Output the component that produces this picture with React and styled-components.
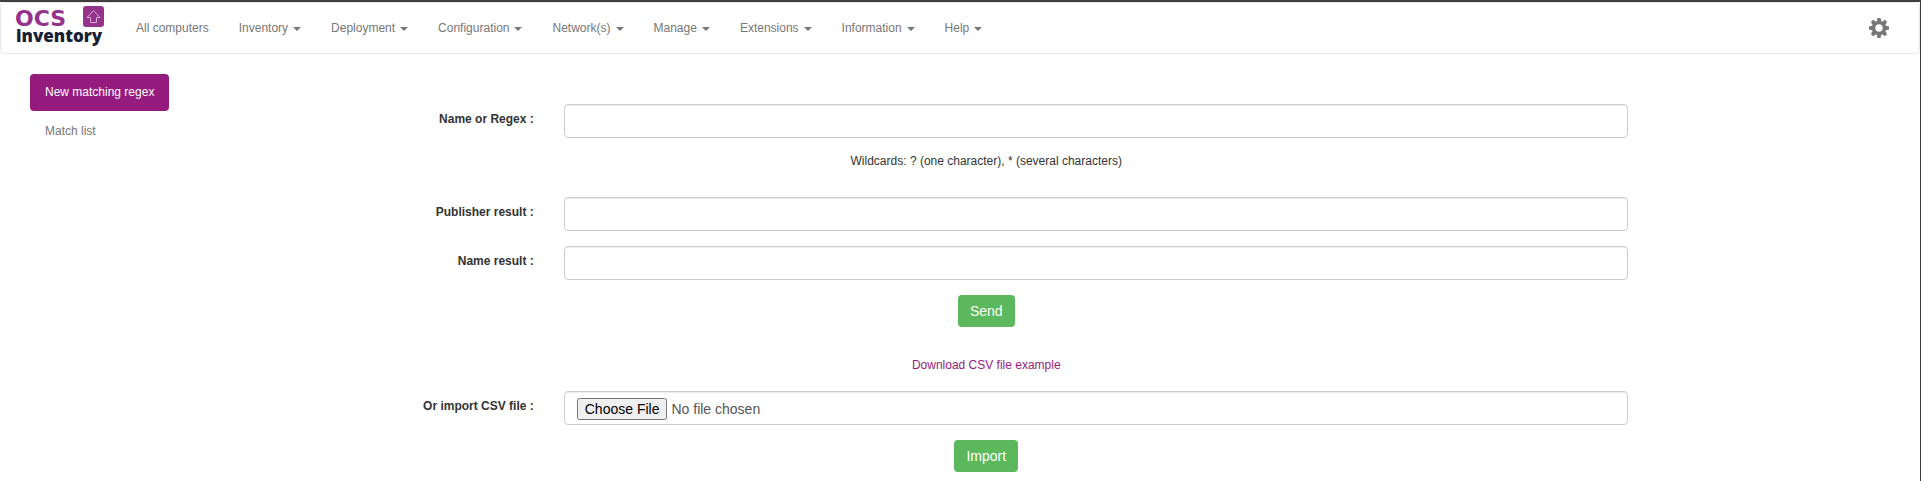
import React from "react";
import styled, { createGlobalStyle } from "styled-components";

const GlobalStyle = createGlobalStyle`
  *, *::before, *::after { box-sizing: border-box; }
  body {
    margin: 0;
    background: #fff;
    color: #333;
    font-family: "Liberation Sans", Arial, sans-serif;
    font-size: 12px;
    line-height: 17px;
  }
`;

const Page = styled.div`
  min-height: 100vh;
  border-top: 2px solid #403d3d;
  border-right: 1px solid #403d3d;
`;

const Navbar = styled.nav`
  display: flex;
  align-items: center;
  min-height: 52px;
  padding: 0 15px;
  border: 1px solid #e7e7e7;
  border-radius: 4px;
  margin-bottom: 20px;
`;

const Brand = styled.a`
  display: block;
  height: 44px;
  margin-right: 15px;
  svg { display: block; }
`;

const Menu = styled.ul`
  display: flex;
  flex: 1;
  list-style: none;
  margin: 0;
  padding: 0;
`;

const MenuLink = styled.a`
  display: block;
  padding: 15px;
  color: #777;
  text-decoration: none;
`;

const MenuButton = styled.button`
  display: flex;
  align-items: center;
  gap: 5px;
  padding: 15px;
  border: 0;
  background: none;
  color: #777;
  font: inherit;
  cursor: pointer;

  &::after {
    content: "";
    border-top: 4px solid;
    border-left: 4px solid transparent;
    border-right: 4px solid transparent;
    margin-top: 2px;
  }
`;

const SettingsButton = styled.button`
  padding: 0 15px;
  border: 0;
  background: none;
  color: #777;
  cursor: pointer;
  svg { display: block; }
`;

const Columns = styled.div`
  display: grid;
  grid-template-columns: 2fr 10fr;
  padding: 0 15px;
`;

const Sidebar = styled.ul`
  display: flex;
  flex-direction: column;
  align-items: flex-start;
  gap: 2px;
  list-style: none;
  margin: 0;
  padding: 0 15px;
`;

const Pill = styled.a`
  display: block;
  padding: 10px 15px;
  border-radius: 4px;
  text-decoration: none;
  color: ${(p) => (p.$active ? "#fff" : "#777")};
  background: ${(p) => (p.$active ? "#961b7e" : "transparent")};
`;

const Form = styled.form`
  width: calc(100% * 10 / 12);
  padding-top: 30px;
`;

const Field = styled.div`
  display: grid;
  grid-template-columns: 2fr 10fr;
  margin-bottom: 15px;
`;

const Label = styled.label`
  padding: 7px 15px 0;
  text-align: right;
  font-weight: bold;
`;

const Control = styled.div`
  padding: 0 15px;
`;

const Input = styled.input`
  display: block;
  width: 100%;
  height: 34px;
  padding: 6px 12px;
  border: 1px solid #ccc;
  border-radius: 4px;
  background: #fff;
  color: #555;
  font: 14px/20px "Liberation Sans", Arial, sans-serif;
  box-shadow: inset 0 1px 1px rgba(0, 0, 0, 0.075);
`;

const Hint = styled.p`
  margin: 0 0 27px;
  text-align: center;
`;

const Actions = styled.div`
  display: flex;
  justify-content: center;
`;

const Submit = styled.button`
  padding: 6px 12px;
  border: 0;
  border-radius: 4px;
  background: #5cb85c;
  color: #fff;
  font: 14px/20px "Liberation Sans", Arial, sans-serif;
  cursor: pointer;
`;

const Download = styled.p`
  margin: 30px 0 17px;
  text-align: center;
  a { color: #961b7e; text-decoration: none; }
`;

const Logo = () => (
  <svg width="90" height="44" viewBox="0 0 90 44" role="img" aria-label="OCS Inventory">
    <text x="-1" y="20" fontFamily="DejaVu Sans" fontWeight="bold" fontSize="22" fill="#94328c">OCS</text>
    <rect x="67" y="0" width="21" height="21" rx="3" fill="#94328c" />
    <path d="M77.500 4.500 L84 11.500 H80.500 V16.500 H74.500 V11.500 H71 Z" fill="none" stroke="#d9a8d5" strokeWidth="1" />
    <text x="0" y="36" fontFamily="Open Sans" fontWeight="800" fontSize="17" fill="#172032">inventory</text>
  </svg>
);

const Gear = () => (
  <svg width="20" height="20" viewBox="0 0 20 20" aria-hidden="true">
    <g fill="currentColor">
      {[0, 45, 90, 135].map((a) => (
        <path key={a} d="M8.500 0h3l1 4v12l-1 4h-3l-1-4V4z" transform={`rotate(${a} 10 10)`} />
      ))}
      <circle cx="10" cy="10" r="7" />
    </g>
    <circle cx="10" cy="10" r="3.700" fill="#fff" />
  </svg>
);

const menus = ["Inventory", "Deployment", "Configuration", "Network(s)", "Manage", "Extensions", "Information", "Help"];

const TextField = ({ id, label, type = "text" }) => (
  <Field>
    <Label htmlFor={id}>{label}</Label>
    <Control><Input id={id} name={id} type={type} /></Control>
  </Field>
);

export default function App() {
  return (
    <Page>
      <GlobalStyle />
      <Navbar>
        <Brand href="#"><Logo /></Brand>
        <Menu>
          <li><MenuLink href="#computers">All computers</MenuLink></li>
          {menus.map((name) => (
            <li key={name}><MenuButton type="button">{name}</MenuButton></li>
          ))}
        </Menu>
        <SettingsButton type="button" aria-label="Settings"><Gear /></SettingsButton>
      </Navbar>
      <Columns>
        <Sidebar>
          <li><Pill href="#new" $active>New matching regex</Pill></li>
          <li><Pill href="#list">Match list</Pill></li>
        </Sidebar>
        <main>
          <Form onSubmit={(e) => e.preventDefault()}>
            <TextField id="regex" label="Name or Regex :" />
            <Hint>Wildcards: ? (one character), * (several characters)</Hint>
            <TextField id="publisher" label="Publisher result :" />
            <TextField id="name" label="Name result :" />
            <Actions><Submit type="submit">Send</Submit></Actions>
            <Download><a href="#example">Download CSV file example</a></Download>
            <TextField id="csv" label="Or import CSV file :" type="file" />
            <Actions><Submit type="submit">Import</Submit></Actions>
          </Form>
        </main>
      </Columns>
    </Page>
  );
}
